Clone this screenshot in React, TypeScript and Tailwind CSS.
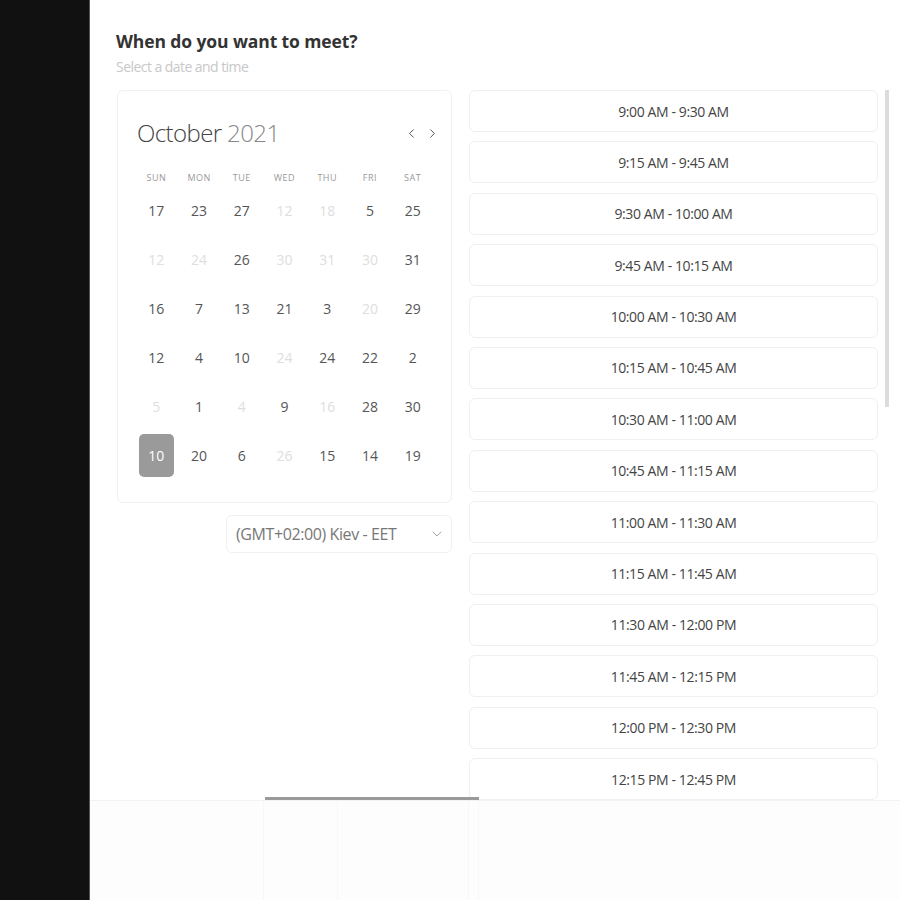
import { ChevronDown, ChevronLeft, ChevronRight } from "lucide-react";

type Day = { n: number; muted?: boolean; selected?: boolean };

const weekDays = ["Sun", "Mon", "Tue", "Wed", "Thu", "Fri", "Sat"];

const rows: Day[][] = [
  [{ n: 17 }, { n: 23 }, { n: 27 }, { n: 12, muted: true }, { n: 18, muted: true }, { n: 5 }, { n: 25 }],
  [{ n: 12, muted: true }, { n: 24, muted: true }, { n: 26 }, { n: 30, muted: true }, { n: 31, muted: true }, { n: 30, muted: true }, { n: 31 }],
  [{ n: 16 }, { n: 7 }, { n: 13 }, { n: 21 }, { n: 3 }, { n: 20, muted: true }, { n: 29 }],
  [{ n: 12 }, { n: 4 }, { n: 10 }, { n: 24, muted: true }, { n: 24 }, { n: 22 }, { n: 2 }],
  [{ n: 5, muted: true }, { n: 1 }, { n: 4, muted: true }, { n: 9 }, { n: 16, muted: true }, { n: 28 }, { n: 30 }],
  [{ n: 10, selected: true }, { n: 20 }, { n: 6 }, { n: 26, muted: true }, { n: 15 }, { n: 14 }, { n: 19 }],
];

const slots = [
  "9:00 AM - 9:30 AM",
  "9:15 AM - 9:45 AM",
  "9:30 AM - 10:00 AM",
  "9:45 AM - 10:15 AM",
  "10:00 AM - 10:30 AM",
  "10:15 AM - 10:45 AM",
  "10:30 AM - 11:00 AM",
  "10:45 AM - 11:15 AM",
  "11:00 AM - 11:30 AM",
  "11:15 AM - 11:45 AM",
  "11:30 AM - 12:00 PM",
  "11:45 AM - 12:15 PM",
  "12:00 PM - 12:30 PM",
  "12:15 PM - 12:45 PM",
];

function Calendar() {
  return (
    <div className="w-[335px] rounded-md border border-[#f1f1f1] bg-white px-[17px] pb-[22px] pt-[25px]">
      <div className="flex h-[34px] items-center justify-between pl-[2px]">
        <div className="text-[24px] font-light tracking-[-0.6px]">
          <span className="text-[#444]">October</span> <span className="text-[#888]">2021</span>
        </div>
        <div className="-mr-[6px] flex items-center gap-[6px] text-[#555]">
          <ChevronLeft className="h-[15px] w-[15px]" strokeWidth={1.6} />
          <ChevronRight className="h-[15px] w-[15px]" strokeWidth={1.6} />
        </div>
      </div>
      <div className="mt-[20px] grid h-[16px] grid-cols-7 items-center">
        {weekDays.map((d) => (
          <div key={d} className="text-center text-[9px] uppercase tracking-[0.5px] text-[#999]">
            {d}
          </div>
        ))}
      </div>
      <div className="grid grid-cols-7">
        {rows.flat().map((day, i) => (
          <div key={i} className="flex h-[49px] items-center justify-center">
            {day.selected ? (
              <div className="flex h-[43px] w-[35px] items-center justify-center rounded-[5px] bg-[#9a9a9a] text-[14px] text-white">
                {day.n}
              </div>
            ) : (
              <span className={`text-[14px] ${day.muted ? "text-[#dedede]" : "text-[#555]"}`}>{day.n}</span>
            )}
          </div>
        ))}
      </div>
    </div>
  );
}

export default function App() {
  return (
    <div className="flex h-[900px] w-[900px] overflow-hidden bg-white font-['Open_Sans',sans-serif]">
      <aside className="w-[90px] shrink-0 border-r border-[#555] bg-[#111]" />
      <main className="relative flex flex-1 flex-col">
        <section className="h-[800px] flex-none overflow-hidden pl-[26px] pt-[29px]">
          <h1 className="text-[17.5px] font-bold leading-[24px] tracking-[-0.1px] text-[#333]">When do you want to meet?</h1>
          <p className="mt-[4px] text-[14px] leading-[20px] tracking-[-0.55px] text-[#c8c8c8]">Select a date and time</p>
          <div className="mt-[13px] flex gap-[17px] pl-px">
            <div className="flex flex-col items-end">
              <Calendar />
              <button className="mt-[12px] flex h-[38px] w-[226px] items-center justify-between rounded-md border border-[#f1f1f1] pl-[9px] pr-[6px] text-[16px] tracking-[-0.4px] text-[#777]">
                <span>(GMT+02:00) Kiev - EET</span>
                <ChevronDown className="h-[16px] w-[16px] text-[#999]" strokeWidth={1.3} />
              </button>
            </div>
            <div className="flex">
              <div className="flex w-[409px] flex-col gap-[9.4px]">
                {slots.map((s) => (
                  <div
                    key={s}
                    className="flex h-[42px] shrink-0 items-center justify-center rounded-md border border-[#efefef] text-[14px] tracking-[-0.4px] text-[#444]"
                  >
                    {s}
                  </div>
                ))}
              </div>
              <div className="ml-[7px] w-[4px]">
                <div className="h-[317px] w-[4px] bg-[#dcdcdc]" />
              </div>
            </div>
          </div>
        </section>
        <section className="flex flex-1 border-t border-[#f2f2f2] bg-[#fdfdfd]">
          <div className="ml-[173px] w-[74px] border-l border-[#f7f7f7]" />
          <div className="w-[131px] border-l border-[#f7f7f7]" />
          <div className="w-[11px] border-x border-[#f7f7f7]" />
        </section>
        <div className="absolute left-[175px] top-[797px] h-[3px] w-[214px] bg-[#9a9a9a]" />
      </main>
    </div>
  );
}
